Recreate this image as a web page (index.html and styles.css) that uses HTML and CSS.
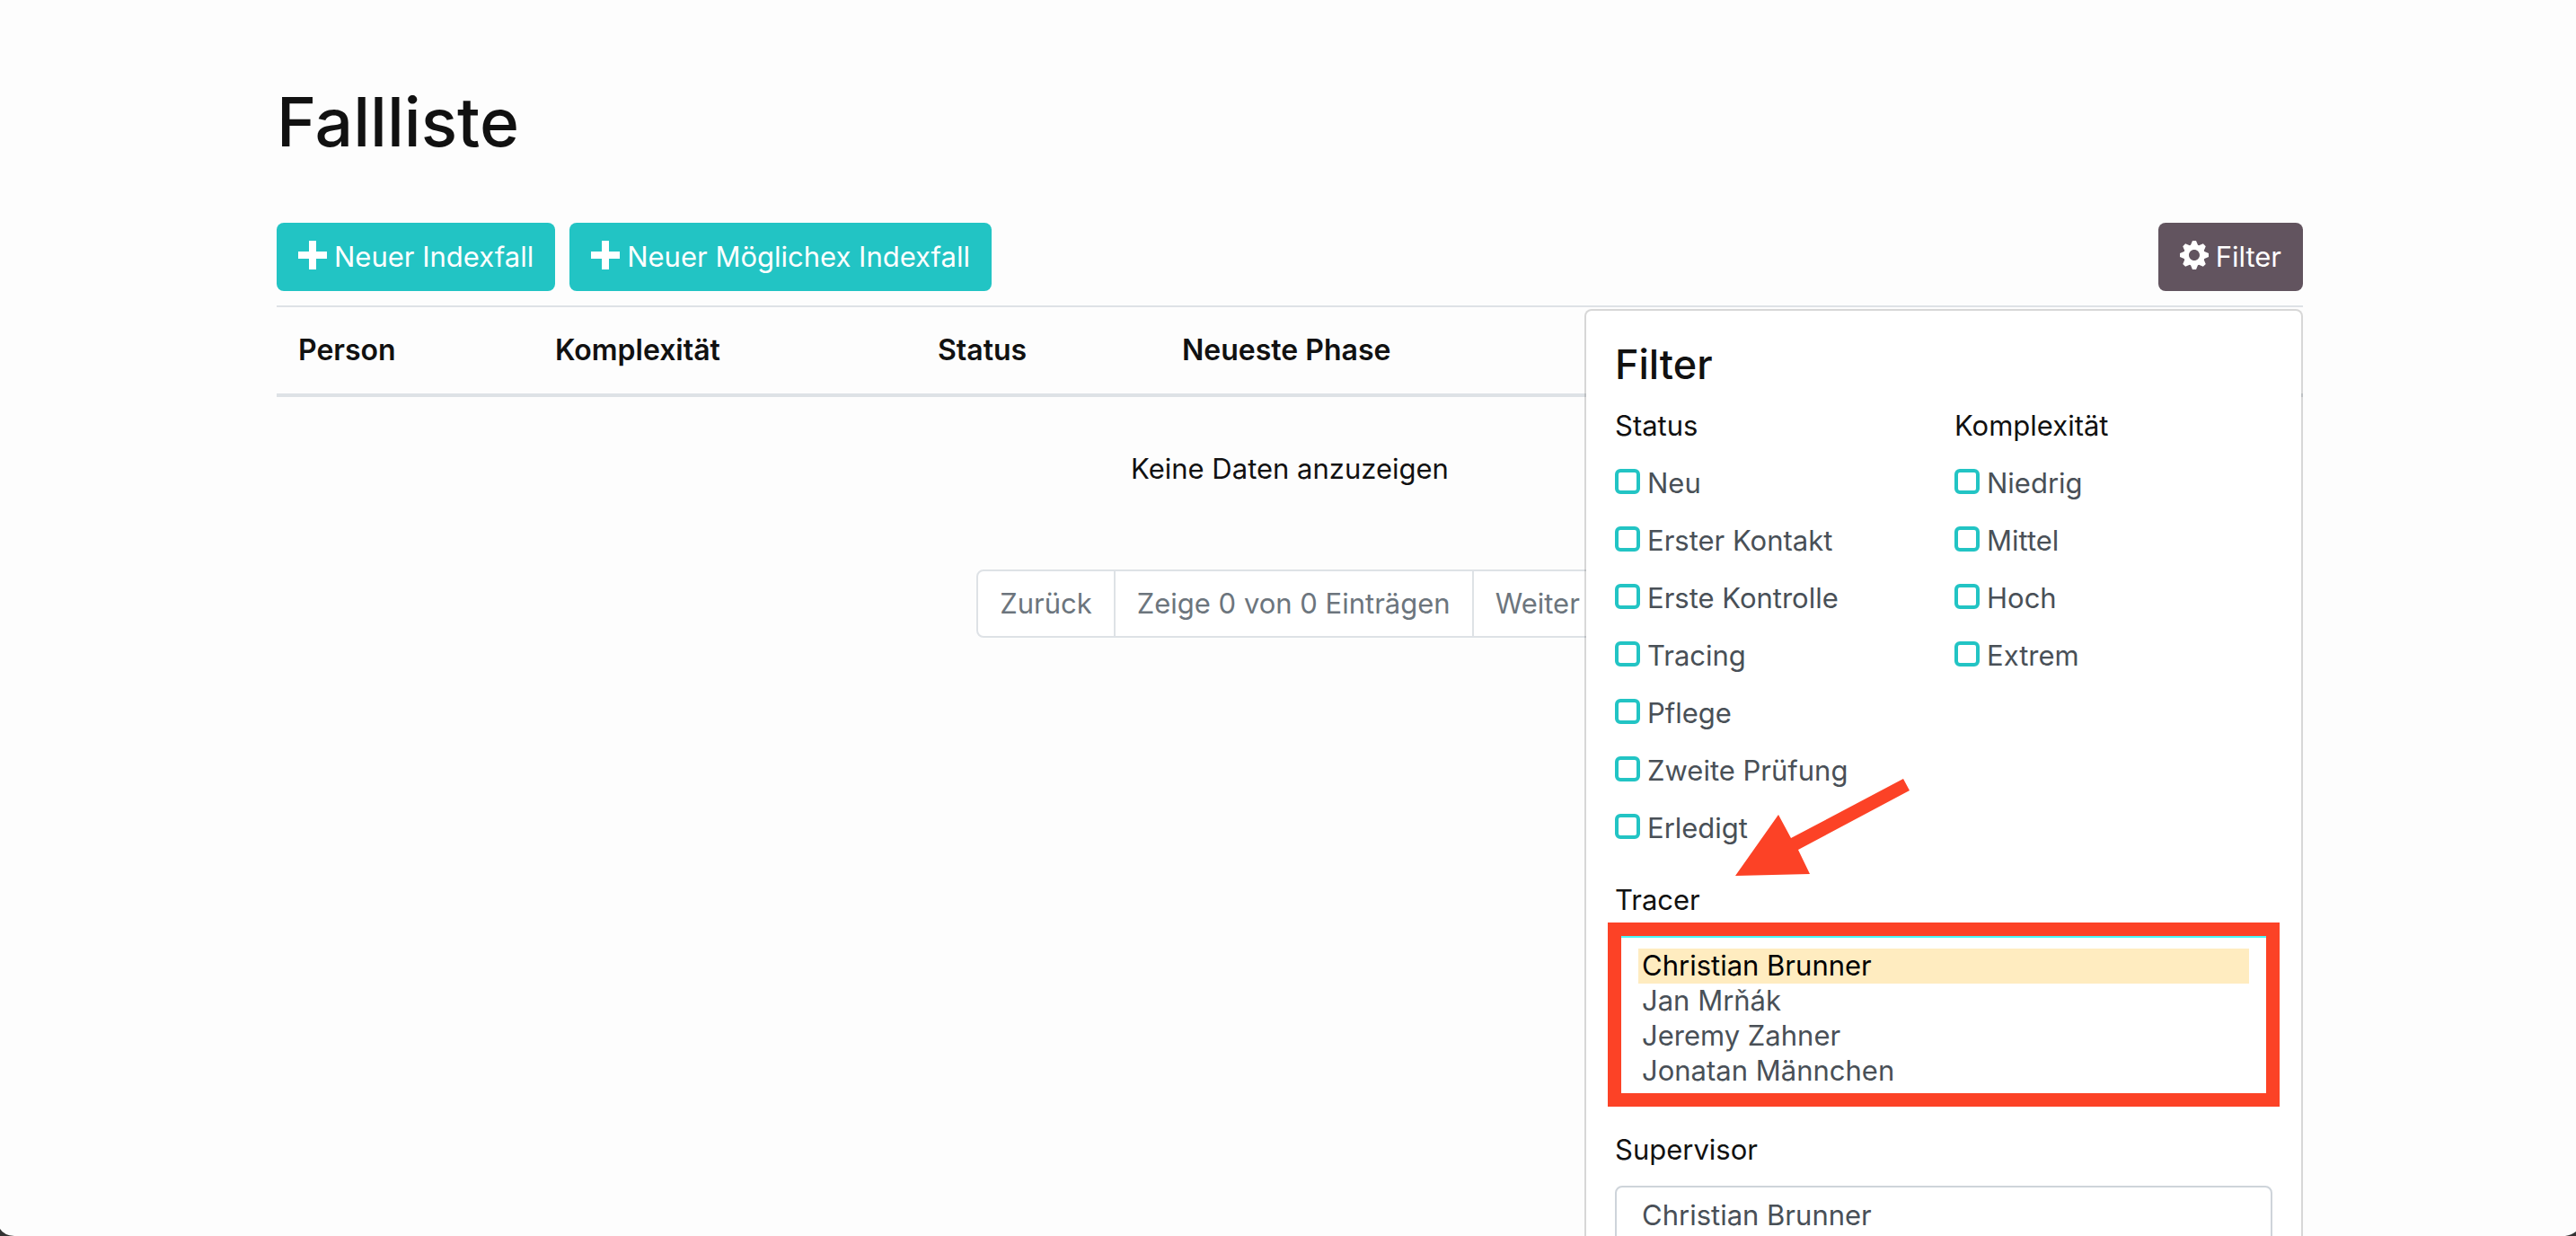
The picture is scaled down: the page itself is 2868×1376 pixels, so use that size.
FILE: index.html
```html
<!DOCTYPE html>
<html lang="de">
<head>
<meta charset="utf-8">
<title>Fallliste</title>
<link rel="stylesheet" href="styles.css">
</head>
<body>
<main class="page">
  <h1 class="page-title">Fallliste</h1>

  <div class="toolbar">
    <button type="button" class="btn btn-primary">
      <svg class="icon" viewBox="0 0 8 8" aria-hidden="true"><path d="M3 0v3h-3v2h3v3h2v-3h3v-2h-3v-3h-2z"/></svg>
      Neuer Indexfall
    </button>
    <button type="button" class="btn btn-primary">
      <svg class="icon" viewBox="0 0 8 8" aria-hidden="true"><path d="M3 0v3h-3v2h3v3h2v-3h3v-2h-3v-3h-2z"/></svg>
      Neuer Möglichex Indexfall
    </button>
    <div class="dropdown">
      <button type="button" class="btn btn-secondary" aria-expanded="true">
        <svg class="icon" viewBox="0 0 8 8" aria-hidden="true"><path d="M3.5 0l-.5 1.19c-.1.03-.19.08-.28.13l-1.19-.5-.72.72.5 1.19c-.05.1-.09.18-.13.28l-1.19.5v1l1.19.5c.04.1.08.18.13.28l-.5 1.19.72.72 1.19-.5c.09.04.18.09.28.13l.5 1.19h1l.5-1.19c.09-.04.19-.08.28-.13l1.19.5.72-.72-.5-1.19c.04-.09.09-.19.13-.28l1.19-.5v-1l-1.19-.5c-.03-.09-.08-.19-.13-.28l.5-1.19-.72-.72-1.19.5c-.09-.04-.19-.09-.28-.13l-.5-1.19h-1zm.5 2.5c.83 0 1.5.67 1.5 1.5s-.67 1.5-1.5 1.5-1.5-.67-1.5-1.5.67-1.5 1.5-1.5z"/></svg>
        Filter
      </button>
      <form class="dropdown-menu">
        <h2 class="menu-title">Filter</h2>
        <div class="menu-columns">
          <fieldset class="group">
            <legend class="group-title">Status</legend>
            <label class="check"><input type="checkbox">Neu</label>
            <label class="check"><input type="checkbox">Erster Kontakt</label>
            <label class="check"><input type="checkbox">Erste Kontrolle</label>
            <label class="check"><input type="checkbox">Tracing</label>
            <label class="check"><input type="checkbox">Pflege</label>
            <label class="check"><input type="checkbox">Zweite Prüfung</label>
            <label class="check"><input type="checkbox">Erledigt</label>
          </fieldset>
          <fieldset class="group">
            <legend class="group-title">Komplexität</legend>
            <label class="check"><input type="checkbox">Niedrig</label>
            <label class="check"><input type="checkbox">Mittel</label>
            <label class="check"><input type="checkbox">Hoch</label>
            <label class="check"><input type="checkbox">Extrem</label>
          </fieldset>
        </div>
        <div class="field">
          <label for="tracer">Tracer</label>
          <div class="marked">
            <select id="tracer" class="list list-active" multiple size="4">
              <option selected>Christian Brunner</option>
              <option>Jan Mrňák</option>
              <option>Jeremy Zahner</option>
              <option>Jonatan Männchen</option>
            </select>
            <svg class="arrow" viewBox="0 0 196 110" aria-hidden="true"><path d="M1 109L49 41L63 67L188 1L195 14L71 80L84 107Z"/></svg>
          </div>
        </div>
        <div class="field">
          <label for="supervisor">Supervisor</label>
          <select id="supervisor" class="list" multiple size="4">
            <option>Christian Brunner</option>
            <option>Jan Mrňák</option>
            <option>Jeremy Zahner</option>
            <option>Jonatan Männchen</option>
          </select>
        </div>
      </form>
    </div>
  </div>

  <table class="cases">
    <colgroup><col class="col-person"><col class="col-complexity"><col class="col-status"><col></colgroup>
    <thead>
      <tr><th scope="col">Person</th><th scope="col">Komplexität</th><th scope="col">Status</th><th scope="col">Neueste Phase</th></tr>
    </thead>
    <tbody>
      <tr><td colspan="4">Keine Daten anzuzeigen</td></tr>
    </tbody>
  </table>

  <nav class="pagination" aria-label="Seiten">
    <button type="button" disabled>Zurück</button>
    <span>Zeige 0 von 0 Einträgen</span>
    <button type="button" disabled>Weiter</button>
  </nav>
</main>
<svg class="corner corner-left" viewBox="0 0 16 8" aria-hidden="true"><path d="M0 0Q4 7 16 8H0Z"/></svg>
<svg class="corner corner-right" viewBox="0 0 16 8" aria-hidden="true"><path d="M16 3Q11 7 4 8H16Z"/></svg>
</body>
</html>
```

FILE: styles.css
```css
* {
  box-sizing: border-box;
}

html {
  height: 100%;
  overflow: hidden;
}

body {
  margin: 0;
  height: 100%;
  overflow: hidden;
  background: #fdfdfd;
  color: #111;
  font-family: Inter, "Liberation Sans", sans-serif;
  font-size: 31px;
  line-height: 48px;
}

button,
select {
  font: inherit;
}

.page {
  padding: 88px 304px 0 308px;
}

.page-title {
  margin: 0 0 64px;
  font-size: 75px;
  font-weight: 500;
  line-height: 96px;
}

.toolbar {
  display: flex;
  gap: 16px;
  margin-bottom: 16px;
}

.btn {
  display: flex;
  gap: 8px;
  padding: 14px 24px;
  border: 0;
  border-radius: 8px;
  color: #fff;
  white-space: nowrap;
}

.btn-primary {
  background: #22c4c4;
}

.btn-secondary {
  background: #62545f;
}

.icon {
  width: 32px;
  height: 32px;
  margin-top: 6px;
  fill: currentColor;
}

.dropdown {
  position: relative;
  margin-left: auto;
}

.dropdown-menu {
  position: absolute;
  top: 100%;
  right: 0;
  z-index: 1;
  width: 800px;
  margin-top: 20px;
  padding: 32px;
  border: 2px solid rgba(0, 0, 0, 0.15);
  border-radius: 8px;
  background: #fff;
  background-clip: padding-box;
}

.menu-title {
  margin: 0 0 16px;
  font-size: 45px;
  font-weight: 500;
  line-height: 56px;
}

.menu-columns {
  display: grid;
  grid-template-columns: 1fr 1fr;
  gap: 24px;
  margin-bottom: 32px;
}

.group {
  display: flex;
  flex-direction: column;
  gap: 16px;
  min-width: 0;
  margin: 0;
  padding: 0;
  border: 0;
}

.group-title {
  margin-bottom: 16px;
  padding: 0;
}

.check {
  display: flex;
  gap: 8px;
  color: #495057;
}

.check input {
  appearance: none;
  width: 28px;
  height: 28px;
  margin: 8px 0 0;
  border: 4px solid #22c4c4;
  border-radius: 6px;
  background: #fff;
}

.field {
  display: grid;
  gap: 16px;
  margin-bottom: 32px;
}

.list {
  display: block;
  width: 100%;
  height: 182px;
  padding: 12px 24px;
  border: 2px solid #ced4da;
  border-radius: 8px;
  outline: 0;
  background: #fff;
  color: #495057;
  overflow: hidden;
  scrollbar-width: none;
}

.list option {
  min-height: 39px;
  padding: 0 4px;
  line-height: 39px;
}

.list-active {
  border-color: #4bf8f8;
}

.list-active option:checked {
  background: #ffecc0 linear-gradient(#ffecc0, #ffecc0);
  color: #000;
}

.marked {
  position: relative;
}

.marked::after {
  content: "";
  position: absolute;
  inset: -15px -8px -8px;
  border: 15px solid #fc4226;
  pointer-events: none;
}

.arrow {
  position: absolute;
  left: 133px;
  bottom: 248px;
  width: 196px;
  height: 110px;
  fill: #fc4226;
}

.cases {
  width: 100%;
  border-collapse: separate;
  border-spacing: 0;
  table-layout: fixed;
}

.col-person {
  width: 286px;
}

.col-complexity {
  width: 426px;
}

.col-status {
  width: 272px;
}

.cases th {
  padding: 24px;
  border-top: 2px solid #dee2e6;
  border-bottom: 4px solid #dee2e6;
  font-size: 32px;
  font-weight: 600;
  text-align: left;
}

.cases td {
  padding: 56px 24px 88px;
  text-align: center;
}

.pagination {
  display: flex;
  justify-content: center;
}

.pagination > * {
  padding: 12px 24px;
  border: 2px solid #dee2e6;
  background: #fff;
  color: #6c757d;
}

.pagination > * + * {
  margin-left: -2px;
}

.pagination > :first-child {
  border-radius: 8px 0 0 8px;
}

.pagination > :last-child {
  border-radius: 0 8px 8px 0;
}

.corner {
  position: fixed;
  bottom: 0;
  z-index: 2;
  width: 16px;
  height: 8px;
  fill: #333;
}

.corner-left {
  left: 0;
}

.corner-right {
  right: 0;
}
```
